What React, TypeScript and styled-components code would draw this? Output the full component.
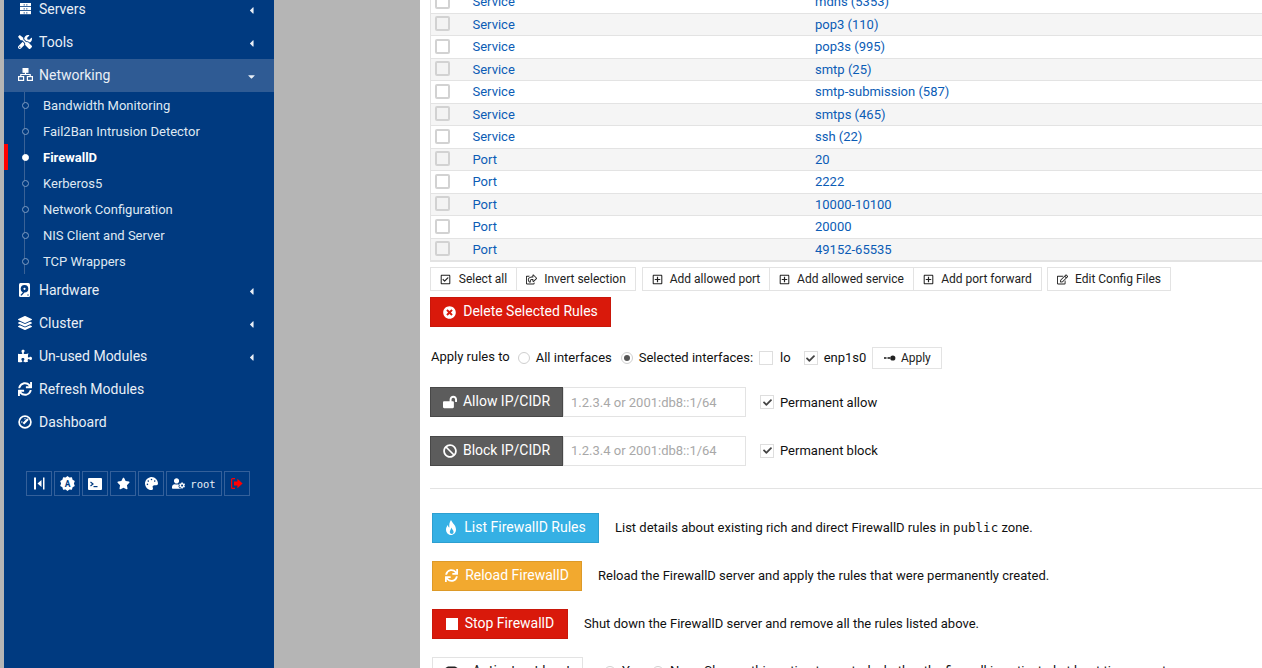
import React from "react";
import styled, { createGlobalStyle } from "styled-components";
import {
  FaTools, FaLayerGroup, FaPuzzlePiece, FaSync, FaStar, FaPalette, FaUserCog,
  FaRegCheckSquare, FaRegShareSquare, FaRegPlusSquare, FaRegEdit, FaTimesCircle,
  FaLockOpen, FaBan, FaCheck, FaCaretLeft, FaCaretDown, FaToggleOn,
} from "react-icons/fa";

const Global = createGlobalStyle`
  html, body { margin: 0; padding: 0; height: 100%; overflow: hidden; background: #fff; }
  body { font-family: Roboto, "Liberation Sans", sans-serif; font-size: 13px; color: #111; }
  * { box-sizing: border-box; }
`;

const Page = styled.div`
  display: grid;
  grid-template-columns: 4px 270px 146px 1fr;
  height: 668px;
  overflow: hidden;
`;
const Gutter = styled.div`background: #b5b5b5;`;
const Sidebar = styled.nav`
  background: #003a80;
  overflow: hidden;
  color: #e6edf5;
  height: 668px;
`;
const MenuList = styled.div`
  margin-top: -7px;
  display: flex;
  flex-direction: column;
`;
const MenuItem = styled.div<{ $open?: boolean }>`
  height: 33px;
  display: flex;
  align-items: center;
  padding: 0 17px 2px 14px;
  font-size: 14px;
  background: ${(p) => (p.$open ? "#2f5b94" : "transparent")};
  color: #e9eff6;
`;
const MenuIcon = styled.span`
  width: 21px;
  display: flex;
  justify-content: flex-start;
  font-size: 14px;
  color: #fff;
  svg { display: block; }
`;
const MenuLabel = styled.span`
  flex: 1;
  white-space: nowrap;
`;
const Caret = styled.span`
  display: flex;
  font-size: 11px;
  margin-top: 4px;
  color: #e9eff6;
`;
const SubList = styled.div`
  display: flex;
  flex-direction: column;
  background: linear-gradient(#3a6296, #3a6296) no-repeat 20px 0 / 1px 100%;
`;
const SubItem = styled.div<{ $active?: boolean }>`
  height: 26px;
  display: flex;
  align-items: center;
  padding-left: 39px;
  font-size: 13px;
  position: relative;
  color: ${(p) => (p.$active ? "#fff" : "#dfe8f2")};
  font-weight: ${(p) => (p.$active ? 700 : 400)};
  &::before {
    content: "";
    position: absolute;
    left: 18px;
    top: 10px;
    width: 5px;
    height: 5px;
    border-radius: 50%;
    background: ${(p) => (p.$active ? "#fff" : "#003a80")};
    border: 1px solid ${(p) => (p.$active ? "#fff" : "#7f9dc2")};
  }
  &::after {
    content: "";
    display: ${(p) => (p.$active ? "block" : "none")};
    position: absolute;
    left: 0;
    top: 0;
    width: 4px;
    height: 26px;
    background: #f00;
  }
`;
const QuickBar = styled.div`
  display: flex;
  gap: 2px;
  margin: 32px 0 0 22px;
`;
const QuickBtn = styled.div<{ $wide?: boolean; $red?: boolean }>`
  height: 25px;
  width: ${(p) => (p.$wide ? "56px" : "26px")};
  border: 1px solid #34609a;
  display: flex;
  align-items: center;
  justify-content: center;
  gap: 5px;
  color: ${(p) => (p.$red ? "#f00" : "#fff")};
  font-size: 13px;
  svg { display: block; }
`;
const Mono = styled.span`
  font-family: "DejaVu Sans Mono", "Liberation Mono", monospace;
  font-size: 10.5px;
  color: #e9eff6;
`;
const Backdrop = styled.div`background: #b5b5b5;`;
const Main = styled.main`
  background: #fff;
  padding-left: 10px;
  overflow: hidden;
  height: 668px;
  width: 842px;
`;
const Table = styled.div`
  margin-top: -9px;
  border-left: 1px solid #e3e3e3;
  border-bottom: 1px solid #e3e3e3;
  width: 860px;
`;
const Row = styled.div<{ $odd: boolean }>`
  height: 22.5px;
  display: grid;
  grid-template-columns: 37.5px 342.5px 1fr;
  align-items: center;
  background: ${(p) => (p.$odd ? "#f5f5f5" : "#fff")};
  border-bottom: 1px solid #e3e3e3;
  color: #0b5cb5;
  font-size: 13px;
  padding-left: 4px;
`;
const RowCheck = styled.span<{ $odd: boolean }>`
  width: 15px;
  height: 15px;
  border: 2px solid #d2d2d2;
  border-radius: 2px;
  background: ${(p) => (p.$odd ? "#f3f3f3" : "#fff")};
  display: block;
  margin-top: -1px;
`;
const ToolRow = styled.div`
  display: flex;
  margin-top: 5px;
`;
const BtnGroup = styled.div`
  display: flex;
  margin-right: 6px;
  &:nth-child(2) { margin-right: 5px; }
`;
const ToolBtn = styled.div<{ $w: number; $gap?: number }>`
  width: ${(p) => p.$w}px;
  height: 24px;
  border: 1px solid #e3e3e3;
  margin-left: -1px;
  &:first-child { margin-left: 0; }
  display: flex;
  align-items: center;
  justify-content: center;
  gap: ${(p) => p.$gap ?? 7}px;
  font-size: 12px;
  color: #222;
  background: #fff;
  white-space: nowrap;
  svg { display: block; font-size: 11px; }
`;
const ActionBtn = styled.div<{ $bg: string; $bd: string; $w: number }>`
  width: ${(p) => p.$w}px;
  height: 30px;
  padding-bottom: 2px;
  background: ${(p) => p.$bg};
  border: 1px solid ${(p) => p.$bd};
  color: #fff;
  display: flex;
  align-items: center;
  justify-content: center;
  gap: 7px;
  font-size: 14px;
  flex: none;
  white-space: nowrap;
  svg { display: block; font-size: 13px; margin-top: 2px; flex: none; }
`;
const DeleteWrap = styled.div`margin-top: 6px;`;
const ApplyRow = styled.div`
  display: flex;
  align-items: center;
  height: 22px;
  margin-top: 20px;
  white-space: nowrap;
  font-size: 13px;
`;
const Lbl = styled.span`
  margin-bottom: 2px;
`;
const LeadLbl = styled(Lbl)`
  margin: 0 -1px 3px 1px;
`;
const Desc = styled.span`
  margin-bottom: 1px;
`;
const Radio = styled.span<{ $on?: boolean }>`
  width: 12px;
  height: 12px;
  border-radius: 50%;
  border: 1px solid #cfcfcf;
  margin: 0 6px 0 9px;
  flex: none;
  display: flex;
  align-items: center;
  justify-content: center;
  &::after {
    content: "";
    width: 6px;
    height: 6px;
    border-radius: 50%;
    background: ${(p) => (p.$on ? "#555" : "transparent")};
  }
`;
const Check = styled.span<{ $ml?: number; $mr?: number }>`
  width: 14px;
  height: 14px;
  border: 1px solid #dedede;
  margin-left: ${(p) => p.$ml ?? 0}px;
  margin-right: ${(p) => p.$mr ?? 0}px;
  display: flex;
  align-items: center;
  justify-content: center;
  color: #444;
  flex: none;
  svg { font-size: 9px; display: block; }
`;
const ApplyBtn = styled.div`
  width: 70px;
  height: 22px;
  border: 1px solid #e3e3e3;
  margin-left: 6px;
  padding-bottom: 1px;
  display: flex;
  align-items: center;
  justify-content: center;
  gap: 5px;
  font-size: 12px;
  color: #222;
`;
const CidrRow = styled.div<{ $mt: number }>`
  display: flex;
  align-items: center;
  margin-top: ${(p) => p.$mt}px;
  height: 30px;
`;
const DarkBtn = styled(ActionBtn)`
  gap: 6px;
  svg { font-size: 14px; }
`;
const FakeInput = styled.div`
  width: 183px;
  height: 30px;
  border: 1px solid #e3e3e3;
  margin-right: 14px;
  padding-left: 7px;
  display: flex;
  align-items: center;
  color: #a8a8a8;
  font-size: 13px;
  white-space: nowrap;
`;
const Rule = styled.hr`
  border: 0;
  border-top: 1px solid #e3e3e3;
  margin: 22px 0 24px;
  width: 832px;
`;
const ActionRow = styled.div`
  display: flex;
  align-items: center;
  height: 30px;
  margin-bottom: 18px;
  padding-left: 2px;
  white-space: nowrap;
  font-size: 13px;
  gap: 16px;
`;
const Code = styled.code`
  font-family: "DejaVu Sans Mono", "Liberation Mono", monospace;
  font-size: 12.5px;
`;
const LightBtn = styled(ActionBtn)`
  color: #222;
  gap: 13px;
  svg { font-size: 15px; }
`;
const Option = styled.span`
  display: inline-flex;
  align-items: center;
  margin-left: -4px;
`;
const OptionHelp = styled(Lbl)`
  margin-left: 17px;
`;

const Serv = () => (
  <svg width="11" height="12" viewBox="0 0 11 12" style={{ marginLeft: 2 }}>
    {[0, 4, 8].map((y) => (
      <g key={y}>
        <rect x="0" y={y} width="11" height="3.2" fill="#fff" />
        <rect x="3.6" y={y + 1.4} width="1.2" height="1" fill="#003a80" />
        <rect x="6.2" y={y + 1.4} width="1.2" height="1" fill="#003a80" />
      </g>
    ))}
  </svg>
);
const Net = () => (
  <svg width="15" height="13" viewBox="0 0 15 13" fill="none" stroke="#fff" strokeWidth="1.2">
    <rect x="5.1" y="0.6" width="4.8" height="3.6" fill="#fff" />
    <path d="M7.5 4 V6.5 M2.8 8.5 V6.5 H12.2 V8.5" />
    <rect x="0.6" y="8.6" width="5" height="3.8" />
    <rect x="9.4" y="8.6" width="5" height="3.8" />
  </svg>
);
const Disk = () => (
  <svg width="14" height="14" viewBox="0 0 14 14" style={{ marginLeft: 1 }}>
    <rect x="0" y="0" width="11" height="14" rx="1.5" fill="#fff" />
    <circle cx="5.5" cy="5.8" r="3.8" fill="#003a80" />
    <circle cx="5.5" cy="5.8" r="1.1" fill="#fff" />
    <path d="M2 12.4 L5 9" stroke="#003a80" strokeWidth="1.3" />
    <circle cx="9" cy="12" r="0.7" fill="#003a80" />
  </svg>
);
const Gauge = () => (
  <svg width="14" height="14" viewBox="0 0 14 14" fill="none" stroke="#fff" strokeWidth="1.7">
    <circle cx="7" cy="7" r="5.9" />
    <path d="M5.4 8.8 L10 4" strokeWidth="2.2" />
    <path d="M3 7 H4.5 M7 3 V4.4" strokeWidth="1" />
  </svg>
);
const Split = () => (
  <svg width="12" height="13" viewBox="0 0 12 13" fill="currentColor">
    <rect x="1" y="0.5" width="2" height="12" /><rect x="10" y="0.5" width="1.5" height="12" /><path d="M8.5 3 L4.5 6.5 L8.5 10 Z" />
  </svg>
);
const Badge = () => (
  <svg width="15" height="15" viewBox="0 0 15 15">
    <path fill="#fff" d="M7.5 0 L9.4 1.6 L11.9 1.3 L12.6 3.7 L14.8 5 L13.9 7.5 L14.8 10 L12.6 11.3 L11.9 13.7 L9.4 13.4 L7.5 15 L5.6 13.4 L3.1 13.7 L2.4 11.3 L0.2 10 L1.1 7.5 L0.2 5 L2.4 3.7 L3.1 1.3 L5.6 1.6 Z" />
    <text x="7.5" y="10.6" textAnchor="middle" fontSize="8.5" fontWeight="700" fontFamily="Roboto, sans-serif" fill="#003a80">A</text>
  </svg>
);
const Term = () => (
  <svg width="14" height="12" viewBox="0 0 14 12">
    <rect x="0" y="0" width="14" height="12" rx="1" fill="#fff" />
    <path d="M2.5 4 L5 6 L2.5 8" fill="none" stroke="#003a80" strokeWidth="1.2" />
    <rect x="5.5" y="8" width="4" height="1.2" fill="#003a80" />
  </svg>
);
const Exit = () => (
  <svg width="12" height="11" viewBox="0 0 12 11" fill="#f00">
    <path d="M4 0.6 H1.6 A1 1 0 0 0 0.6 1.6 V9.4 A1 1 0 0 0 1.6 10.4 H4" fill="none" stroke="#f00" strokeWidth="1.2" />
    <path d="M3 3.4 H6.4 V0.8 L11.6 5.5 L6.4 10.2 V7.6 H3 Z" />
  </svg>
);
const Plug = () => (
  <svg width="12" height="6" viewBox="0 0 12 6" fill="#222">
    <rect x="0" y="2.2" width="2.5" height="1.6" /><rect x="3.5" y="2.2" width="2.5" height="1.6" /><circle cx="8.8" cy="3" r="2.6" />
  </svg>
);
const Square = () => (
  <svg width="12" height="12" viewBox="0 0 12 12" fill="#fff"><rect width="12" height="12" /></svg>
);
const Flame = () => (
  <svg width="12" height="15" viewBox="0 0 12 15">
    <path fill="#fff" d="M6 0 C7 3 11 5 11 9.5 C11 12.5 8.8 15 6 15 C3.2 15 1 12.5 1 9.5 C1 7.5 2 6 3 5 C3 6.5 3.6 7.2 4.4 7.5 C4 5 4.5 2 6 0 Z" />
    <path fill="#35b0e4" d="M6.4 7.5 C6.8 9.5 8.6 10 8.6 12 C8.6 13.2 7.8 14 6.8 14 C5.8 14 4.8 13.2 4.8 12 C4.8 10.5 6 9.5 6.4 7.5 Z" />
  </svg>
);

const services = ["mdns (5353)", "pop3 (110)", "pop3s (995)", "smtp (25)", "smtp-submission (587)", "smtps (465)", "ssh (22)"];
const ports = ["20", "2222", "10000-10100", "20000", "49152-65535"];
const rows = [
  ...services.map((v) => ["Service", v]),
  ...ports.map((v) => ["Port", v]),
];
const subs = ["Bandwidth Monitoring", "Fail2Ban Intrusion Detector", "FirewallD", "Kerberos5", "Network Configuration", "NIS Client and Server", "TCP Wrappers"];

export default function App() {
  return (
    <Page>
      <Global />
      <Gutter />
      <Sidebar>
        <MenuList>
          <MenuItem><MenuIcon><Serv /></MenuIcon><MenuLabel>Servers</MenuLabel><Caret><FaCaretLeft /></Caret></MenuItem>
          <MenuItem><MenuIcon><FaTools /></MenuIcon><MenuLabel>Tools</MenuLabel><Caret><FaCaretLeft /></Caret></MenuItem>
          <MenuItem $open><MenuIcon><Net /></MenuIcon><MenuLabel>Networking</MenuLabel><Caret><FaCaretDown /></Caret></MenuItem>
          <SubList>
            {subs.map((s) => <SubItem key={s} $active={s === "FirewallD"}>{s}</SubItem>)}
          </SubList>
          <MenuItem><MenuIcon><Disk /></MenuIcon><MenuLabel>Hardware</MenuLabel><Caret><FaCaretLeft /></Caret></MenuItem>
          <MenuItem><MenuIcon><FaLayerGroup /></MenuIcon><MenuLabel>Cluster</MenuLabel><Caret><FaCaretLeft /></Caret></MenuItem>
          <MenuItem><MenuIcon><FaPuzzlePiece /></MenuIcon><MenuLabel>Un-used Modules</MenuLabel><Caret><FaCaretLeft /></Caret></MenuItem>
          <MenuItem><MenuIcon><FaSync /></MenuIcon><MenuLabel>Refresh Modules</MenuLabel></MenuItem>
          <MenuItem><MenuIcon><Gauge /></MenuIcon><MenuLabel>Dashboard</MenuLabel></MenuItem>
        </MenuList>
        <QuickBar>
          <QuickBtn><Split /></QuickBtn>
          <QuickBtn><Badge /></QuickBtn>
          <QuickBtn><Term /></QuickBtn>
          <QuickBtn><FaStar /></QuickBtn>
          <QuickBtn><FaPalette /></QuickBtn>
          <QuickBtn $wide><FaUserCog /><Mono>root</Mono></QuickBtn>
          <QuickBtn $red><Exit /></QuickBtn>
        </QuickBar>
      </Sidebar>
      <Backdrop />
      <Main>
        <Table>
          {rows.map(([a, b], i) => (
            <Row key={b} $odd={i % 2 === 1}>
              <RowCheck $odd={i % 2 === 1} />
              <span>{a}</span>
              <span>{b}</span>
            </Row>
          ))}
        </Table>
        <ToolRow>
          <BtnGroup>
            <ToolBtn $w={87} $gap={8}><FaRegCheckSquare />Select all</ToolBtn>
            <ToolBtn $w={120}><FaRegShareSquare />Invert selection</ToolBtn>
          </BtnGroup>
          <BtnGroup>
            <ToolBtn $w={128}><FaRegPlusSquare />Add allowed port</ToolBtn>
            <ToolBtn $w={145}><FaRegPlusSquare />Add allowed service</ToolBtn>
            <ToolBtn $w={129}><FaRegPlusSquare />Add port forward</ToolBtn>
          </BtnGroup>
          <BtnGroup>
            <ToolBtn $w={124}><FaRegEdit />Edit Config Files</ToolBtn>
          </BtnGroup>
        </ToolRow>
        <DeleteWrap>
          <ActionBtn $bg="#d9190b" $bd="#c9170a" $w={181}><FaTimesCircle />Delete Selected Rules</ActionBtn>
        </DeleteWrap>
        <ApplyRow>
          <LeadLbl>Apply rules to</LeadLbl>
          <Radio /><Lbl>All interfaces</Lbl>
          <Radio $on /><Lbl>Selected interfaces:</Lbl>
          <Check $ml={6} $mr={7} /><Lbl>lo</Lbl>
          <Check $ml={13} $mr={6}><FaCheck /></Check><Lbl>enp1s0</Lbl>
          <ApplyBtn><Plug />Apply</ApplyBtn>
        </ApplyRow>
        <CidrRow $mt={18}>
          <DarkBtn $bg="#5c5c5c" $bd="#484848" $w={133}><FaLockOpen />Allow IP/CIDR</DarkBtn>
          <FakeInput>1.2.3.4 or 2001:db8::1/64</FakeInput>
          <Check $mr={6}><FaCheck /></Check>Permanent allow
        </CidrRow>
        <CidrRow $mt={18.6}>
          <DarkBtn $bg="#5c5c5c" $bd="#484848" $w={133}><FaBan />Block IP/CIDR</DarkBtn>
          <FakeInput>1.2.3.4 or 2001:db8::1/64</FakeInput>
          <Check $mr={6}><FaCheck /></Check>Permanent block
        </CidrRow>
        <Rule />
        <ActionRow>
          <ActionBtn $bg="#35b0e4" $bd="#2d9fd0" $w={167}><Flame />List FirewallD Rules</ActionBtn>
          <Desc>List details about existing rich and direct FirewallD rules in <Code>public</Code> zone.</Desc>
        </ActionRow>
        <ActionRow>
          <ActionBtn $bg="#f2a92f" $bd="#dd9a28" $w={150}><FaSync />Reload FirewallD</ActionBtn>
          <Desc>Reload the FirewallD server and apply the rules that were permanently created.</Desc>
        </ActionRow>
        <ActionRow>
          <ActionBtn $bg="#d9190b" $bd="#c9170a" $w={136}><Square />Stop FirewallD</ActionBtn>
          <Desc>Shut down the FirewallD server and remove all the rules listed above.</Desc>
        </ActionRow>
        <ActionRow>
          <LightBtn $bg="#fff" $bd="#e3e3e3" $w={151}><FaToggleOn />Activate at boot</LightBtn>
          <Option>
            <Radio /><Lbl>Yes</Lbl>
            <Radio /><Lbl>No</Lbl>
            <OptionHelp>Change this option to control whether the firewall is activated at boot time or not.</OptionHelp>
          </Option>
        </ActionRow>
      </Main>
    </Page>
  );
}
